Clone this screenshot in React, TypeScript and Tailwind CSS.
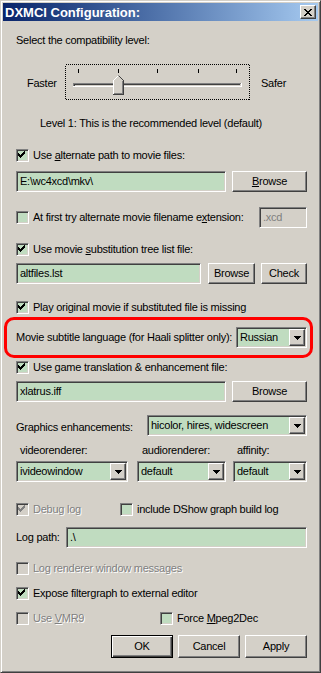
import type { ReactNode } from "react";

// DXMCI Configuration – Windows classic dialog, window colour set to money green

const SUNKEN =
  "border border-t-[#808080] border-l-[#808080] border-b-white border-r-white shadow-[inset_1px_1px_0_#404040,inset_-1px_-1px_0_#d4d0c8] p-[1px]";
const RAISED =
  "border border-t-white border-l-white border-b-[#404040] border-r-[#404040] shadow-[inset_-1px_-1px_0_#808080,inset_1px_1px_0_#d4d0c8] bg-[#d4d0c8]";

function CheckMark({ gray }: { gray?: boolean }) {
  const c = gray ? "#808080" : "#000";
  return (
    <svg width="13" height="13" className="absolute left-[-2px] top-[-2px]" shapeRendering="crispEdges">
      <rect x="9" y="3" width="1" height="1" fill={c} />
      <rect x="8" y="4" width="2" height="1" fill={c} />
      <rect x="3" y="5" width="1" height="1" fill={c} />
      <rect x="7" y="5" width="3" height="1" fill={c} />
      <rect x="3" y="6" width="2" height="1" fill={c} />
      <rect x="6" y="6" width="3" height="1" fill={c} />
      <rect x="3" y="7" width="5" height="1" fill={c} />
      <rect x="4" y="8" width="3" height="1" fill={c} />
      <rect x="5" y="9" width="1" height="1" fill={c} />
    </svg>
  );
}

function CheckBox({
  checked,
  disabled,
  children,
}: {
  checked?: boolean;
  disabled?: boolean;
  children: ReactNode;
}) {
  return (
    <div className="flex h-[13px] items-center">
      <div
        className={`relative h-[13px] w-[13px] shrink-0 ${SUNKEN} ${
          disabled ? "bg-[#d4d0c8]" : "bg-[#c0dcc0]"
        }`}
      >
        {checked && <CheckMark gray={disabled} />}
      </div>
      <span
        className={`ml-[4px] whitespace-nowrap ${
          disabled ? "text-[#808080] [text-shadow:1px_1px_0_#ffffff]" : ""
        }`}
      >
        {children}
      </span>
    </div>
  );
}

function Field({ value, className, disabled }: { value: string; className: string; disabled?: boolean }) {
  return (
    <div
      className={`flex h-[21px] items-center ${SUNKEN} ${className} ${
        disabled ? "bg-[#d4d0c8] text-[#808080]" : "bg-[#c0dcc0]"
      }`}
    >
      <span className="pl-[2px] whitespace-nowrap">{value}</span>
    </div>
  );
}

function Arrow() {
  return (
    <svg width="7" height="4" shapeRendering="crispEdges">
      <rect x="0" y="0" width="7" height="1" fill="#000" />
      <rect x="1" y="1" width="5" height="1" fill="#000" />
      <rect x="2" y="2" width="3" height="1" fill="#000" />
      <rect x="3" y="3" width="1" height="1" fill="#000" />
    </svg>
  );
}

function Combo({ value, className }: { value: string; className: string }) {
  return (
    <div className={`flex h-[21px] items-stretch bg-[#c0dcc0] ${SUNKEN} ${className}`}>
      <span className="flex flex-1 items-center overflow-hidden whitespace-nowrap pl-[2px]">{value}</span>
      <div className={`flex w-[16px] items-center justify-center ${RAISED}`}>
        <Arrow />
      </div>
    </div>
  );
}

function Button({ children, className, isDefault }: { children: ReactNode; className: string; isDefault?: boolean }) {
  const look = isDefault
    ? "border border-black bg-[#d4d0c8] shadow-[inset_1px_1px_0_#ffffff,inset_-1px_-1px_0_#404040,inset_-2px_-2px_0_#808080]"
    : RAISED;
  return (
    <div className={`flex items-center justify-center ${look} ${className}`}>
      <span>{children}</span>
    </div>
  );
}

function Slider() {
  const ticks = [13, 53, 92, 133, 171];
  return (
    <svg width="185" height="36" shapeRendering="crispEdges">
      <rect x="0.5" y="0.5" width="184" height="35" fill="none" stroke="#000" strokeDasharray="1 1" />
      {ticks.map((x) => (
        <rect key={x} x={x} y="5" width="1" height="4" fill="#000" />
      ))}
      {/* groove */}
      <rect x="8" y="19" width="168" height="1" fill="#808080" />
      <rect x="8" y="19" width="1" height="3" fill="#808080" />
      <rect x="9" y="20" width="166" height="1" fill="#404040" />
      <rect x="9" y="20" width="1" height="2" fill="#404040" />
      <rect x="8" y="22" width="169" height="1" fill="#ffffff" />
      <rect x="176" y="19" width="1" height="4" fill="#ffffff" />
      {/* thumb */}
      <polygon points="48,16 53,11 58,16 58,31 48,31" fill="#d4d0c8" shapeRendering="auto" />
      <line x1="48.5" y1="16.5" x2="53.5" y2="11.5" stroke="#ffffff" shapeRendering="auto" />
      <line x1="53.5" y1="11.5" x2="58.5" y2="16.5" stroke="#404040" shapeRendering="auto" />
      <rect x="48" y="16" width="1" height="14" fill="#ffffff" />
      <rect x="58" y="16" width="1" height="15" fill="#404040" />
      <rect x="48" y="30" width="11" height="1" fill="#404040" />
      <rect x="57" y="17" width="1" height="13" fill="#808080" />
      <rect x="49" y="29" width="8" height="1" fill="#808080" />
    </svg>
  );
}

export default function App() {
  return (
    <div className="h-[673px] w-[321px] border border-t-[#d4d0c8] border-l-[#d4d0c8] border-b-[#404040] border-r-[#404040] bg-[#d4d0c8] p-[2px] font-['Liberation_Sans',Arial,sans-serif] text-[11px] leading-[13px] tracking-[-0.25px] text-black shadow-[inset_1px_1px_0_#ffffff,inset_-1px_-1px_0_#808080]">
      {/* title bar */}
      <div className="flex h-[18px] items-center justify-between bg-gradient-to-r from-[#0a246a] to-[#a6caf0] pl-[2px] pr-[2px]">
        <span className="text-[13px] font-bold leading-none tracking-normal text-white">DXMCI Configuration:</span>
        <div className={`flex h-[14px] w-[16px] items-center justify-center ${RAISED}`}>
          <svg width="8" height="7" shapeRendering="crispEdges">
            {[0, 1, 2, 3, 4, 5, 6].map((i) => (
              <g key={i}>
                <rect x={i} y={i} width="2" height="1" fill="#000" />
                <rect x={6 - i} y={i} width="2" height="1" fill="#000" />
              </g>
            ))}
          </svg>
        </div>
      </div>

      <div className="flex flex-col pl-[13px] pr-[11px]">
        <div className="mt-[13px] h-[13px]">Select the compatibility level:</div>

        <div className="mt-[17px] flex h-[36px] items-center">
          <span className="w-[49px] pl-[11px] pt-[3px]">Faster</span>
          <Slider />
          <span className="ml-[11px] pt-[3px]">Safer</span>
        </div>

        <div className="mt-[17px] h-[13px] pl-[24px]">Level 1: This is the recommended level (default)</div>

        <div className="mt-[19px]">
          <CheckBox checked>
            Use <u>a</u>lternate path to movie files:
          </CheckBox>
        </div>
        <div className="mt-[9px] flex justify-between">
          <Field value="E:\wc4xcd\mkv\" className="w-[210px]" />
          <Button className="h-[21px] w-[75px]">
            <u>B</u>rowse
          </Button>
        </div>

        <div className="mt-[15px] flex h-[20px] items-center justify-between">
          <CheckBox>
            At first try alternate movie filename e<u>x</u>tension:
          </CheckBox>
          <Field value=".xcd" className="h-[20px] w-[48px]" disabled />
        </div>

        <div className="mt-[16px]">
          <CheckBox checked>
            Use movie <u>s</u>ubstitution tree list file:
          </CheckBox>
        </div>
        <div className="mt-[7px] flex">
          <Field value="altfiles.lst" className="w-[185px]" />
          <Button className="ml-[7px] h-[21px] w-[47px]">Browse</Button>
          <Button className="ml-[6px] h-[21px] w-[46px]">Check</Button>
        </div>

        <div className="mt-[17px]">
          <CheckBox checked>Play original movie if substituted file is missing</CheckBox>
        </div>

        <div className="mt-[3px] -ml-[12px] -mr-[6px] flex h-[41px] items-center justify-between rounded-[10px] border-[3px] border-[#ff0000] pl-[9px] pr-[3px]">
          <span className="whitespace-nowrap">Movie subtitle language (for Haali splitter only):</span>
          <Combo value="Russian" className="w-[71px]" />
        </div>

        <div className="mt-[3px]">
          <CheckBox checked>Use game translation &amp; enhancement file:</CheckBox>
        </div>
        <div className="mt-[7px] flex justify-between">
          <Field value="xlatrus.iff" className="w-[210px]" />
          <Button className="h-[21px] w-[75px]">Browse</Button>
        </div>

        <div className="mt-[13px] flex items-center justify-between">
          <span className="pt-[4px]">Graphics enhancements:</span>
          <Combo value="hicolor, hires, widescreen" className="w-[160px]" />
        </div>

        <div className="mt-[8px] flex h-[13px]">
          <span className="w-[121px] pl-[4px]">videorenderer:</span>
          <span className="w-[96px] pl-[5px]">audiorenderer:</span>
          <span className="pl-[4px]">affinity:</span>
        </div>
        <div className="mt-[4px] flex">
          <Combo value="ivideowindow" className="w-[112px]" />
          <Combo value="default" className="ml-[9px] w-[89px]" />
          <Combo value="default" className="ml-[7px] w-[74px]" />
        </div>

        <div className="mt-[21px] flex">
          <div className="w-[104px]">
            <CheckBox checked disabled>
              Debug log
            </CheckBox>
          </div>
          <CheckBox>include DShow graph build log</CheckBox>
        </div>

        <div className="mt-[11px] flex items-center justify-between">
          <span>Log path:</span>
          <Field value=".\" className="w-[241px]" />
        </div>

        <div className="mt-[14px]">
          <CheckBox disabled>Log renderer window messages</CheckBox>
        </div>

        <div className="mt-[12px]">
          <CheckBox checked>Expose filtergraph to external editor</CheckBox>
        </div>

        <div className="mt-[12px] flex">
          <div className="w-[144px]">
            <CheckBox disabled>
              Use <u>V</u>MR9
            </CheckBox>
          </div>
          <CheckBox>
            Force <u>M</u>peg2Dec
          </CheckBox>
        </div>

        <div className="mt-[10px] flex justify-end gap-[5px]">
          <Button className="h-[23px] w-[62px]" isDefault>
            OK
          </Button>
          <Button className="h-[23px] w-[62px]">Cancel</Button>
          <Button className="h-[23px] w-[62px]">Apply</Button>
        </div>
      </div>
    </div>
  );
}
